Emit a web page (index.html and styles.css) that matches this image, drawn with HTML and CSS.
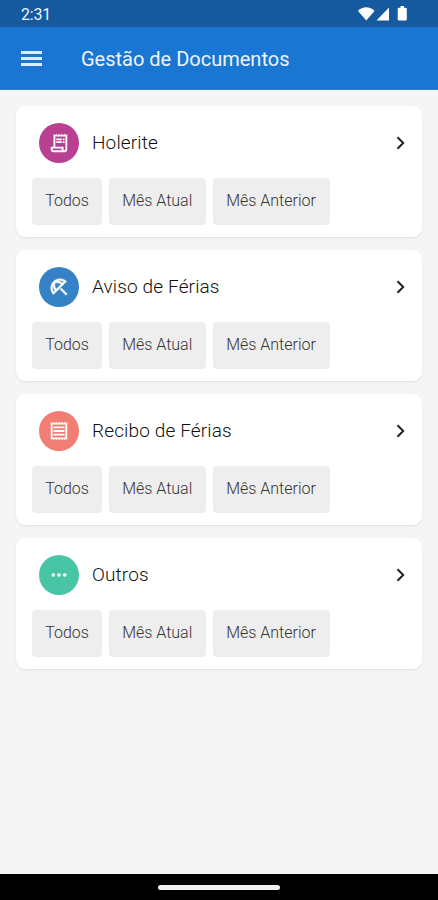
FILE: index.html
```html
<!DOCTYPE html>
<html lang="pt-BR">
<head>
<meta charset="utf-8">
<title>Gestão de Documentos</title>
<link rel="stylesheet" href="styles.css">
</head>
<body>
<div class="status-bar">
  <span class="clock">2:31</span>
  <svg class="status-icons" viewBox="0 0 52 16"><path d="M1 4.900C5.500-.1 13-.1 17.500 4.900L9.300 14.500z"/><path d="M19.500 14.500 32 1.500v13z"/><path d="M43.500 0h3.500v1.700h1.500a1.300 1.300 0 0 1 1.300 1.300v10.200a1.300 1.300 0 0 1-1.300 1.300h-6.500a1.300 1.300 0 0 1-1.300-1.300V3a1.300 1.300 0 0 1 1.300-1.300h1.500z"/></svg>
</div>
<header class="app-bar">
  <div class="menu"><i></i><i></i><i></i></div>
  <h1>Gestão de Documentos</h1>
</header>
<main class="list">
  <section class="card">
    <div class="card-head">
      <span class="badge purple"><svg viewBox="0 0 24 24"><path d="M19.500 3.500 18 2l-1.500 1.500L15 2l-1.500 1.500L12 2l-1.500 1.500L9 2 7.500 3.500 6 2v14H3v3c0 1.660 1.340 3 3 3h12c1.660 0 3-1.340 3-3V2zM15 20H6c-.55 0-1-.45-1-1v-1h10zm4-1c0 .55-.45 1-1 1s-1-.45-1-1v-3H8V5h11zM9 7h6v2H9zm7 0h2v2h-2zM9 10h6v2H9zm7 0h2v2h-2z"/></svg></span>
      <h2>Holerite</h2>
      <svg class="chevron" viewBox="0 0 10 14"><path d="m1.500 1.300 5.700 5.700-5.700 5.700"/></svg>
    </div>
    <div class="actions"><button class="all">Todos</button><button class="current">Mês Atual</button><button class="previous">Mês Anterior</button></div>
  </section>
  <section class="card">
    <div class="card-head">
      <span class="badge blue"><svg viewBox="0 0 24 24"><path d="m21 19.570-1.430 1.430-6.440-6.440 1.430-1.430zM13.120 3c-2.580 0-5.160.98-7.140 2.950l-.01.01c-3.950 3.950-3.950 10.360 0 14.310l14.300-14.310C18.300 3.990 15.710 3 13.120 3zM6.140 17.270C5.400 16.030 5 14.610 5 13.130c0-.93.16-1.820.46-2.670.19 1.910.89 3.790 2.070 5.440zm2.840-2.840C7.630 12.380 7.120 9.930 7.600 7.600c.58-.12 1.160-.18 1.750-.18 1.800 0 3.550.55 5.080 1.560zm6.920-6.920c-1.650-1.170-3.530-1.870-5.440-2.060.85-.3 1.740-.45 2.660-.45 1.480 0 2.900.39 4.140 1.140z"/></svg></span>
      <h2>Aviso de Férias</h2>
      <svg class="chevron" viewBox="0 0 10 14"><path d="m1.500 1.300 5.700 5.700-5.700 5.700"/></svg>
    </div>
    <div class="actions"><button class="all">Todos</button><button class="current">Mês Atual</button><button class="previous">Mês Anterior</button></div>
  </section>
  <section class="card">
    <div class="card-head">
      <span class="badge coral"><svg viewBox="0 0 24 24"><path d="M19.500 3.500 18 2l-1.500 1.500L15 2l-1.500 1.500L12 2l-1.500 1.500L9 2 7.500 3.500 6 2 4.500 3.500 3 2v20l1.500-1.500L6 22l1.500-1.500L9 22l1.500-1.500L12 22l1.500-1.500L15 22l1.500-1.500L18 22l1.500-1.500L21 22V2zm-.5 15.590H5V4.910h14zM6 15h12v2H6zm0-4h12v2H6zm0-4h12v2H6z"/></svg></span>
      <h2>Recibo de Férias</h2>
      <svg class="chevron" viewBox="0 0 10 14"><path d="m1.500 1.300 5.700 5.700-5.700 5.700"/></svg>
    </div>
    <div class="actions"><button class="all">Todos</button><button class="current">Mês Atual</button><button class="previous">Mês Anterior</button></div>
  </section>
  <section class="card">
    <div class="card-head">
      <span class="badge green"><svg viewBox="0 0 24 24"><circle cx="5.800" cy="12" r="2"/><circle cx="12" cy="12" r="2"/><circle cx="18.200" cy="12" r="2"/></svg></span>
      <h2>Outros</h2>
      <svg class="chevron" viewBox="0 0 10 14"><path d="m1.500 1.300 5.700 5.700-5.700 5.700"/></svg>
    </div>
    <div class="actions"><button class="all">Todos</button><button class="current">Mês Atual</button><button class="previous">Mês Anterior</button></div>
  </section>
</main>
<footer class="nav-bar"><span></span></footer>
</body>
</html>
```
FILE: styles.css
```css
* { box-sizing: border-box; }
body {
  margin: 0;
  height: 900px;
  display: flex;
  flex-direction: column;
  overflow: hidden;
  background: #f5f5f5;
  font-family: Roboto, sans-serif;
}
.status-bar {
  height: 27px;
  flex: none;
  display: flex;
  align-items: center;
  justify-content: space-between;
  padding: 1px 29px 0 21px;
  background: #15599f;
  color: #edf4fc;
}
.clock { font-size: 16px; line-height: 20px; margin-top: 2px; letter-spacing: -.2px; }
.status-icons { width: 52px; height: 16px; fill: #fff; }
.app-bar {
  height: 63px;
  flex: none;
  display: flex;
  align-items: center;
  padding-left: 21px;
  background: #1976d2;
  border-bottom: 1px solid #3b79b8;
  color: #edf4fc;
}
.menu { width: 21px; display: grid; gap: 3px; margin-right: 39px; }
.menu i { height: 3px; background: #dcecfb; }
h1 { margin: 2px 0 0; font-size: 20px; font-weight: 400; line-height: 28px; white-space: nowrap; }
.list { flex: 1; padding: 16px 16px 0; display: grid; align-content: start; gap: 13px; }
.card {
  height: 131px;
  padding: 16px;
  border-radius: 9px;
  background: #fff;
  box-shadow: 0 1px 2px rgba(0, 0, 0, .1);
}
.card-head { height: 41px; display: flex; align-items: center; padding: 0 0 0 6.500px; }
.badge {
  width: 40px;
  height: 40px;
  flex: none;
  display: grid;
  place-items: center;
  border-radius: 50%;
}
.badge svg { width: 22px; height: 22px; fill: #fff; }
.purple { background: #b83f91; }
.blue { background: #3583c6; }
.blue path { stroke: #fff; stroke-width: .5; }
.coral { background: #f17d73; }
.green { background: #48c5a5; }
h2 { margin: 0 auto 0 13.500px; font-size: 19px; line-height: 24px; font-weight: 300; letter-spacing: .14px; color: #111; white-space: nowrap; }
.chevron { width: 10px; height: 14px; fill: none; stroke: #222; stroke-width: 2; }
.actions { display: flex; gap: 7px; margin-top: 15px; }
button {
  height: 46.500px;
  padding: 0 0 1px;
  border: 0;
  border-radius: 4px;
  background: #eee;
  color: #333;
  font: 300 16px/20px Roboto, sans-serif;
  letter-spacing: 0;
  white-space: nowrap;
}
.all { width: 70px; }
.current { width: 96.500px; }
.previous { width: 117px; }
.nav-bar { height: 26px; flex: none; display: grid; place-items: center; background: #000; }
.nav-bar span { width: 122px; height: 5px; border-radius: 3px; background: #f0f0f0; }
```
